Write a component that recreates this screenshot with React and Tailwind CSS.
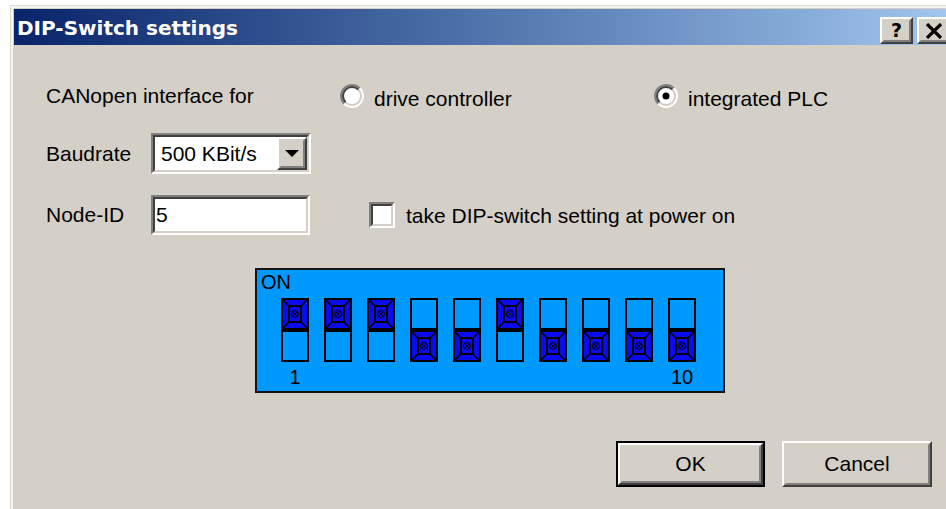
import React from "react";

// knob positions of the ten DIP switches: true = ON (knob up)
const SWITCHES = [true, true, true, false, false, true, false, false, false, false];

function Raised({ className = "", innerClassName = "", children }) {
  return (
    <div className={`border-2 border-t-white border-l-white border-r-[#404040] border-b-[#404040] ${className}`}>
      <div className={`h-full w-full border-2 border-t-[#d4d0c8] border-l-[#d4d0c8] border-r-[#808080] border-b-[#808080] flex items-center justify-center ${innerClassName}`}>
        {children}
      </div>
    </div>
  );
}

function Sunken({ className = "", children }) {
  return (
    <div className={`border-2 border-t-[#808080] border-l-[#808080] border-r-white border-b-white ${className}`}>
      <div className="h-full w-full border-2 border-t-[#404040] border-l-[#404040] border-r-[#d4d0c8] border-b-[#d4d0c8] bg-white flex items-center">
        {children}
      </div>
    </div>
  );
}

function Radio({ checked }) {
  const a = (r) => 12 - r * 0.7071;
  const b = (r) => 12 + r * 0.7071;
  return (
    <svg width="24" height="24" viewBox="0 0 24 24" className="shrink-0">
      <circle cx="12" cy="12" r="9" fill="#fff" />
      <path d={`M${a(11)} ${b(11)} A11 11 0 0 1 ${b(11)} ${a(11)}`} fill="none" stroke="#808080" strokeWidth="2" />
      <path d={`M${b(11)} ${a(11)} A11 11 0 0 1 ${a(11)} ${b(11)}`} fill="none" stroke="#ffffff" strokeWidth="2" />
      <path d={`M${a(9)} ${b(9)} A9 9 0 0 1 ${b(9)} ${a(9)}`} fill="none" stroke="#404040" strokeWidth="2" />
      <path d={`M${b(9)} ${a(9)} A9 9 0 0 1 ${a(9)} ${b(9)}`} fill="none" stroke="#d4d0c8" strokeWidth="2" />
      {checked && <circle cx="12" cy="12" r="3.5" fill="#000" />}
    </svg>
  );
}

function Knob({ y }) {
  return (
    <g transform={`translate(2 ${y})`}>
      <rect x="0" y="0" width="24" height="28" fill="#0b0bef" />
      <path d="M0 0 L6 6 M24 0 L18 6 M0 28 L6 22 M24 28 L18 22" stroke="#000" strokeWidth="1.5" />
      <rect x="6" y="6" width="12" height="16" fill="#0b0bef" stroke="#000" strokeWidth="2" />
      <circle cx="12" cy="14" r="3.5" fill="none" stroke="#000" strokeWidth="1" />
      <path d="M9.6 11.6 L14.4 16.4 M14.4 11.6 L9.6 16.4" stroke="#000" strokeWidth="1" />
    </g>
  );
}

function DipSwitch({ on, label }) {
  return (
    <div className="flex flex-col items-center w-[28px]">
      <svg width="28" height="64" viewBox="0 0 28 64">
        <rect x="1" y="1" width="26" height="62" fill="#0099ff" stroke="#000" strokeWidth="2" />
        <rect x="1" y="30" width="26" height="4" fill="#000" />
        <Knob y={on ? 2 : 34} />
      </svg>
      <div className="h-[24px] mt-[3px] leading-[24px] text-[20px] text-black">{label}</div>
    </div>
  );
}

export default function App() {
  return (
    <div className="w-[946px] h-[509px] overflow-hidden bg-white pl-[10px] pt-[5px] font-['Liberation_Sans',Arial,sans-serif] text-[21px] leading-[24px] text-black">
      <div className="w-[960px] h-[520px] border-l border-t border-[#dcd9d3] bg-[#d4d0c8]">
        <div className="h-full border-l-2 border-t-2 border-[#f6f5f2] pl-[1px] pt-[1px] flex flex-col">
          {/* caption bar */}
          <div className="h-[36px] shrink-0 bg-gradient-to-r from-[#0a246a] to-[#a6caf0] flex items-center pl-[3px] pr-[20px]">
            <div className="flex-1 pt-[2px] font-['DejaVu_Sans',sans-serif] font-bold text-[20px] leading-[24px] text-white">
              DIP-Switch settings
            </div>
            <div className="flex items-center gap-[4px] mt-[7px]">
              <Raised className="w-[33px] h-[27px] bg-[#d4d0c8]">
                <span className="font-['DejaVu_Sans',sans-serif] font-bold text-[19px] leading-none text-black">?</span>
              </Raised>
              <Raised className="w-[33px] h-[27px] bg-[#d4d0c8]">
                <svg width="18" height="16" viewBox="0 0 18 16">
                  <path d="M2 1 L16 15 M16 1 L2 15" stroke="#000" strokeWidth="3.2" />
                </svg>
              </Raised>
            </div>
          </div>

          {/* dialog body */}
          <div className="flex-1 pl-[32px]">
            <div className="mt-[39px] h-[24px] flex items-center">
              <div className="w-[294px]">CANopen interface for</div>
              <div className="w-[314px] flex items-center gap-[10px]">
                <Radio checked={false} />
                <span className="mt-[5px]">drive controller</span>
              </div>
              <div className="flex items-center gap-[10px]">
                <Radio checked={true} />
                <span className="mt-[5px]">integrated PLC</span>
              </div>
            </div>

            <div className="mt-[25px] h-[41px] flex items-center">
              <div className="w-[105px]">Baudrate</div>
              <Sunken className="w-[160px] h-[41px]">
                <div className="flex-1 pl-[6px]">500 KBit/s</div>
                <Raised className="w-[30px] h-[33px] bg-[#d4d0c8]">
                  <svg width="14" height="8" viewBox="0 0 14 8">
                    <path d="M0 0 H14 L7 7 Z" fill="#000" />
                  </svg>
                </Raised>
              </Sunken>
            </div>

            <div className="mt-[21px] h-[40px] flex items-center">
              <div className="w-[105px]">Node-ID</div>
              <Sunken className="w-[159px] h-[40px]">
                <div className="pl-[1px]">5</div>
              </Sunken>
              <div className="ml-[59px] flex items-center gap-[11px]">
                <Sunken className="w-[26px] h-[26px]" />
                <span className="mt-[2px]">take DIP-switch setting at power on</span>
              </div>
            </div>

            <div className="mt-[33px] ml-[209px] w-[470px] h-[125px] border-2 border-[#141414] bg-[#0099ff]">
              <div className="pl-[4px] text-[20px] leading-[24px]">ON</div>
              <div className="mt-[4px] pl-[24px] flex gap-[15px]">
                {SWITCHES.map((on, i) => (
                  <DipSwitch key={i} on={on} label={i === 0 ? "1" : i === 9 ? "10" : ""} />
                ))}
              </div>
            </div>

            <div className="mt-[48px] ml-[570px] flex gap-[17px]">
              <div className="w-[149px] h-[46px] border-2 border-black">
                <Raised className="h-full bg-[#d4d0c8]">OK</Raised>
              </div>
              <Raised className="w-[150px] h-[46px] bg-[#d4d0c8]">Cancel</Raised>
            </div>
          </div>
        </div>
      </div>
    </div>
  );
}
